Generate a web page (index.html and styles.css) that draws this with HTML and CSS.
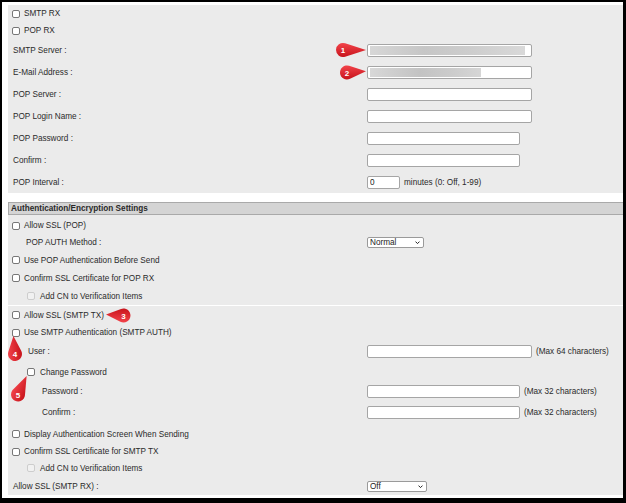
FILE: index.html
```html
<!DOCTYPE html>
<html>
<head>
<meta charset="utf-8">
<link rel="stylesheet" href="styles.css">
</head>
<body>
<div class="frame">
  <section class="panel panel-top">
    <div class="row check h17"><input type="checkbox" class="cb"><span>SMTP RX</span></div>
    <div class="row check h17"><input type="checkbox" class="cb"><span>POP RX</span></div>
    <div class="field h22"><span class="lbl">SMTP Server :</span><div class="ctl"><input class="txt w165 redact-a" type="text"></div></div>
    <div class="field h22"><span class="lbl">E-Mail Address :</span><div class="ctl"><input class="txt w165 redact-b" type="text"></div></div>
    <div class="field h22"><span class="lbl">POP Server :</span><div class="ctl"><input class="txt w165" type="text"></div></div>
    <div class="field h22"><span class="lbl">POP Login Name :</span><div class="ctl"><input class="txt w165" type="text"></div></div>
    <div class="field h22"><span class="lbl">POP Password :</span><div class="ctl"><input class="txt w153" type="password"></div></div>
    <div class="field h22"><span class="lbl">Confirm :</span><div class="ctl"><input class="txt w153" type="password"></div></div>
    <div class="field h22"><span class="lbl">POP Interval :</span><div class="ctl"><input class="txt w33" type="text" value="0"><span>minutes (0: Off, 1-99)</span></div></div>
  </section>
  <div class="header">Authentication/Encryption Settings</div>
  <section class="panel panel-auth">
    <div class="row check h17"><input type="checkbox" class="cb"><span>Allow SSL (POP)</span></div>
    <div class="field h17"><span class="lbl in1">POP AUTH Method :</span><div class="ctl"><span class="sel-wrap"><select class="sel w57"><option>Normal</option></select><svg class="chev" viewBox="0 0 6 4"><path d="M0.6 0.6 L3 3 L5.4 0.6" fill="none" stroke="#222" stroke-width="1.2"/></svg></span></div></div>
    <div class="row check h18"><input type="checkbox" class="cb"><span>Use POP Authentication Before Send</span></div>
    <div class="row check h18"><input type="checkbox" class="cb"><span>Confirm SSL Certificate for POP RX</span></div>
    <div class="row check sub h18"><input type="checkbox" class="cb" disabled><span>Add CN to Verification Items</span></div>
    <div class="divider"></div>
    <div class="row check h18"><input type="checkbox" class="cb"><span>Allow SSL (SMTP TX)</span></div>
    <div class="row check h17"><input type="checkbox" class="cb"><span>Use SMTP Authentication (SMTP AUTH)</span></div>
    <div class="field h20"><span class="lbl in2">User :</span><div class="ctl"><input class="txt w165" type="text"><span>(Max 64 characters)</span></div></div>
    <div class="row check sub h22"><input type="checkbox" class="cb"><span>Change Password</span></div>
    <div class="field h17"><span class="lbl in3">Password :</span><div class="ctl"><input class="txt w153" type="password"><span>(Max 32 characters)</span></div></div>
    <div class="field h24"><span class="lbl in3">Confirm :</span><div class="ctl"><input class="txt w153" type="password"><span>(Max 32 characters)</span></div></div>
    <div class="row check h20"><input type="checkbox" class="cb"><span>Display Authentication Screen When Sending</span></div>
    <div class="row check h15"><input type="checkbox" class="cb"><span>Confirm SSL Certificate for SMTP TX</span></div>
    <div class="row check sub h18"><input type="checkbox" class="cb" disabled><span>Add CN to Verification Items</span></div>
    <div class="field h18"><span class="lbl">Allow SSL (SMTP RX) :</span><div class="ctl"><span class="sel-wrap"><select class="sel w60"><option>Off</option></select><svg class="chev" viewBox="0 0 6 4"><path d="M0.6 0.6 L3 3 L5.4 0.6" fill="none" stroke="#222" stroke-width="1.2"/></svg></span></div></div>
  </section>
</div>
<svg class="pins" viewBox="0 0 626 503" width="626" height="503">
  <defs>
    <linearGradient id="red" x1="0" y1="0" x2="0" y2="1">
      <stop offset="0" stop-color="#f2434a"/>
      <stop offset="1" stop-color="#c8141c"/>
    </linearGradient>
  </defs>
  <g transform="translate(343,50)">
    <path d="M23 0 L2.13 -6.67 A7 7 0 1 0 2.13 6.67 Z" fill="url(#red)"/>
    <text x="0" y="3" class="pin-num">1</text>
  </g>
  <g transform="translate(347,72.5)">
    <path d="M19 0 L2.58 -6.51 A7 7 0 1 0 2.58 6.51 Z" fill="url(#red)" transform="rotate(-4)"/>
    <text x="0" y="3" class="pin-num">2</text>
  </g>
  <g transform="translate(123.5,315.5)">
    <path d="M17.5 0 L2.8 -6.42 A7 7 0 1 0 2.8 6.42 Z" fill="url(#red)" transform="rotate(183)"/>
    <text x="0" y="3" class="pin-num">3</text>
  </g>
  <g transform="translate(15,354)">
    <path d="M18 0 L2.72 -6.45 A7 7 0 1 0 2.72 6.45 Z" fill="url(#red)" transform="rotate(-95)"/>
    <text x="0" y="3" class="pin-num">4</text>
  </g>
  <g transform="translate(18,394.5)">
    <path d="M20.4 0 L2.4 -6.58 A7 7 0 1 0 2.4 6.58 Z" fill="url(#red)" transform="rotate(-65)"/>
    <text x="0" y="3" class="pin-num">5</text>
  </g>
</svg>
</body>
</html>
```
FILE: styles.css
```css
body {
  margin: 0;
  position: relative;
  font-family: "Liberation Sans", Arial, sans-serif;
  font-size: 8.2px;
  color: #2a2a2a;
  background: #fff;
}

.frame {
  box-sizing: border-box;
  width: 626px;
  height: 503px;
  border-style: solid;
  border-color: #000;
  border-width: 2px 3px 5px 2px;
  padding: 3px 0 3px 6px;
  background: #fff;
  display: flex;
  flex-direction: column;
}

.panel {
  background: #ebebeb;
}

.panel-top {
  height: 188px;
  flex: none;
}

.header {
  flex: none;
  margin-top: 9px;
  height: 13px;
  box-sizing: border-box;
  background: #d4d4d4;
  border: 1px solid #a9a9a9;
  border-right: none;
  font-weight: bold;
  padding-left: 2px;
  display: flex;
  align-items: center;
}

.panel-auth {
  flex: 1;
  padding-top: 2px;
}

.h15 { height: 15px; }
.h17 { height: 17px; }
.h18 { height: 18px; }
.h20 { height: 20px; }
.h22 { height: 22px; }
.h24 { height: 24px; }

.row {
  display: flex;
  align-items: center;
}

.check {
  padding-left: 4px;
  gap: 4px;
}

.check.sub {
  padding-left: 19px;
  gap: 5px;
}

.cb {
  appearance: none;
  -webkit-appearance: none;
  box-sizing: border-box;
  width: 8px;
  height: 8px;
  margin: 0;
  border: 1px solid #777;
  border-radius: 2px;
  background: #fff;
  flex: none;
}

.cb:disabled {
  border-color: #cdcdcd;
  background: #f1f1f1;
}

.field {
  display: grid;
  grid-template-columns: 359px auto;
  align-items: center;
}

.lbl { padding-left: 5px; }
.lbl.in1 { padding-left: 18px; }
.lbl.in2 { padding-left: 20px; }
.lbl.in3 { padding-left: 34px; }

.ctl {
  display: flex;
  align-items: center;
  gap: 4px;
}

.txt {
  box-sizing: border-box;
  height: 13px;
  margin: 0;
  padding: 0 2px;
  border: 1px solid #a5a5a5;
  border-radius: 2px;
  background: #fff;
  font-family: "Liberation Sans", Arial, sans-serif;
  font-size: 8.2px;
  color: #222;
  outline: none;
}

.w165 { width: 165px; }
.w153 { width: 153px; }
.w33 { width: 33px; }

.redact-a {
  background: #fff linear-gradient(90deg, #d7d7d7 0%, #c6c6c6 35%, #cdcdcd 65%, #d9d9d9 100%) no-repeat 2px center / 155px 9px;
}

.redact-b {
  background: #fff linear-gradient(90deg, #d8d8d8 0%, #c3c3c3 45%, #cccccc 75%, #d6d6d6 100%) no-repeat 2px center / 111px 9px;
}

.sel-wrap {
  position: relative;
  display: inline-flex;
}

.sel {
  appearance: none;
  -webkit-appearance: none;
  box-sizing: border-box;
  height: 11px;
  margin: 0;
  padding: 0 0 0 2px;
  border: 1px solid #9a9a9a;
  border-radius: 2px;
  background: #fff;
  font-family: "Liberation Sans", Arial, sans-serif;
  font-size: 8.2px;
  line-height: 9px;
  color: #222;
  outline: none;
}

.w57 { width: 57px; }
.w60 { width: 60px; }

.chev {
  position: absolute;
  right: 4px;
  top: 4px;
  width: 5px;
  height: 3.5px;
}

.divider {
  height: 1px;
  background: #fff;
}

.pins {
  position: absolute;
  top: 0;
  left: 0;
  pointer-events: none;
}

.pin-num {
  fill: #fff;
  font-family: "Liberation Sans", Arial, sans-serif;
  font-size: 8px;
  font-weight: bold;
  text-anchor: middle;
}
```
